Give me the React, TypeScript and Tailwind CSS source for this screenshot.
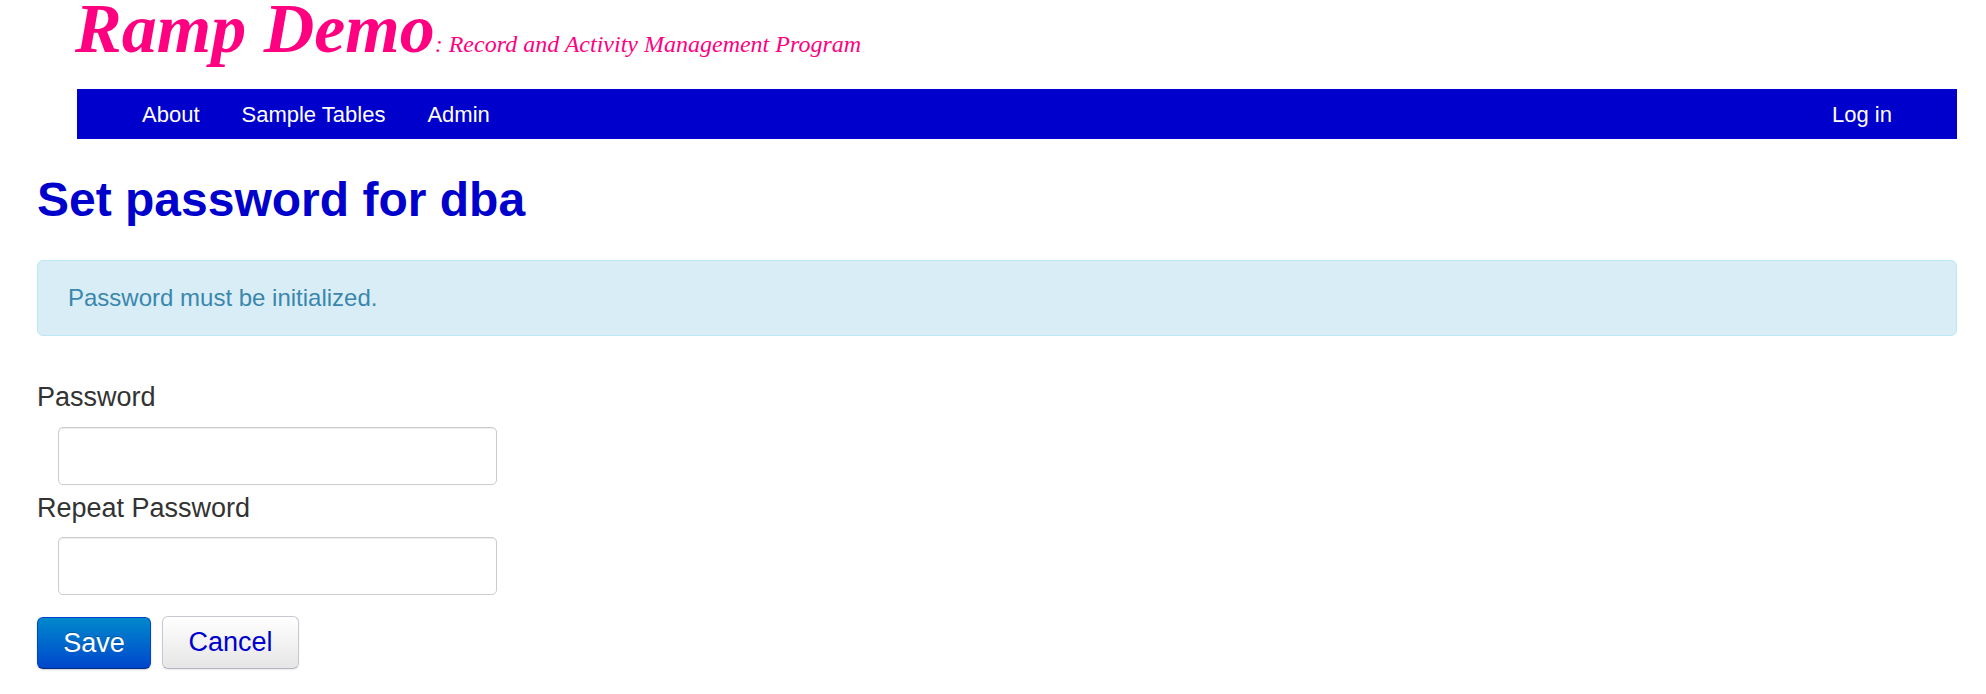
import React from "react";

export default function App() {
  return (
    <div className="min-h-[694px] bg-white font-['Liberation_Sans',Arial,Helvetica,sans-serif] text-[#333333]">
      {/* Header */}
      <div className="h-[89px] pl-[75px]">
        <div className="font-['Liberation_Serif','Times_New_Roman',serif] italic text-[#ff0080] leading-[58px] whitespace-nowrap">
          <span className="text-[70px] font-bold">Ramp Demo</span>
          <span className="text-[24px]">: Record and Activity Management Program</span>
        </div>
      </div>

      {/* Navbar */}
      <nav className="ml-[77px] mr-[29px] h-[50px] bg-[#0000cc] flex items-center justify-between px-[44px] text-white text-[22px]">
        <ul className="flex items-center">
          <li className="px-[21px]">About</li>
          <li className="px-[21px]">Sample Tables</li>
          <li className="px-[21px]">Admin</li>
        </ul>
        <ul className="flex items-center">
          <li className="px-[21px]">Log in</li>
        </ul>
      </nav>

      {/* Content */}
      <div className="pl-[37px] pr-[29px]">
        <h1 className="mt-[37px] text-[48px] leading-[48px] font-bold text-[#0000cc]">
          Set password for dba
        </h1>

        <div className="mt-[36px] h-[76px] flex items-center pl-[30px] bg-[#d9edf7] border border-[#bce8f1] rounded-[6px] text-[#3a87ad] text-[24px]">
          Password must be initialized.
        </div>

        <form className="text-[27px]" onSubmit={(e) => e.preventDefault()}>
          <label className="block mt-[46px] leading-[30px] text-[#333333]">Password</label>
          <input
            type="password"
            className="block mt-[15px] ml-[21px] w-[439px] h-[58px] bg-white border border-[#cccccc] rounded-[5px] shadow-[inset_0_1px_1px_rgba(0,0,0,0.075)] outline-none px-3"
          />
          <label className="block mt-[8px] leading-[30px] text-[#333333]">Repeat Password</label>
          <input
            type="password"
            className="block mt-[14px] ml-[21px] w-[439px] h-[58px] bg-white border border-[#cccccc] rounded-[5px] shadow-[inset_0_1px_1px_rgba(0,0,0,0.075)] outline-none px-3"
          />
          <div className="mt-[22px] flex gap-[11px]">
            <button
              type="submit"
              className="w-[114px] h-[52px] rounded-[6px] bg-linear-to-b from-[#0088cc] to-[#0044cc] border border-[#0044cc] border-b-[#002a80] text-white text-[27px] [text-shadow:0_-1px_0_rgba(0,0,0,0.25)] shadow-[0_1px_2px_rgba(0,0,0,0.2)]"
            >
              Save
            </button>
            <button
              type="button"
              className="w-[137px] h-[53px] -mt-[1px] rounded-[6px] bg-linear-to-b from-[#ffffff] to-[#e6e6e6] border border-[#c8c8d4] border-b-[#b3b3c0] text-[#0000cc] text-[27px] shadow-[0_1px_2px_rgba(0,0,0,0.08)]"
            >
              Cancel
            </button>
          </div>
        </form>
      </div>
    </div>
  );
}
